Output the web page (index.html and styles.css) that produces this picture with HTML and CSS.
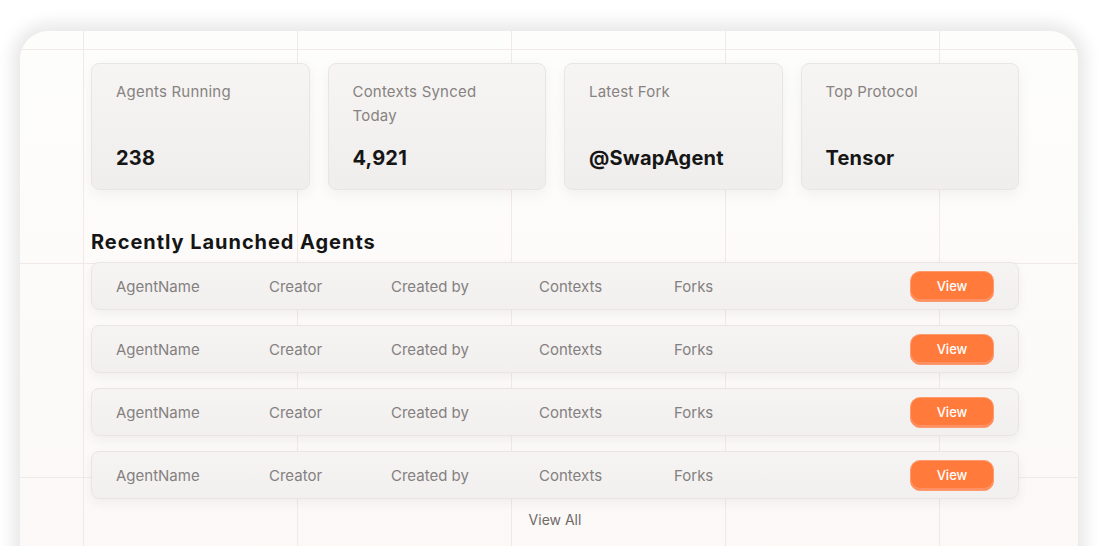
FILE: index.html
```html
<!DOCTYPE html>
<html lang="en">
<head>
<meta charset="utf-8">
<title>Agents Dashboard</title>
<link rel="stylesheet" href="styles.css">
</head>
<body>
<div class="frame">
  <section class="panel">
    <div class="content">
      <div class="stats">
        <div class="stat">
          <div class="stat-label">Agents Running</div>
          <div class="stat-value">238</div>
        </div>
        <div class="stat">
          <div class="stat-label">Contexts Synced Today</div>
          <div class="stat-value">4,921</div>
        </div>
        <div class="stat">
          <div class="stat-label">Latest Fork</div>
          <div class="stat-value">@SwapAgent</div>
        </div>
        <div class="stat">
          <div class="stat-label">Top Protocol</div>
          <div class="stat-value">Tensor</div>
        </div>
      </div>

      <h2 class="heading">Recently Launched Agents</h2>

      <div class="rows">
        <div class="row">
          <div class="cells">
            <span>AgentName</span><span>Creator</span><span>Created by</span><span>Contexts</span><span>Forks</span>
          </div>
          <button class="view-btn">View</button>
        </div>
        <div class="row">
          <div class="cells">
            <span>AgentName</span><span>Creator</span><span>Created by</span><span>Contexts</span><span>Forks</span>
          </div>
          <button class="view-btn">View</button>
        </div>
        <div class="row">
          <div class="cells">
            <span>AgentName</span><span>Creator</span><span>Created by</span><span>Contexts</span><span>Forks</span>
          </div>
          <button class="view-btn">View</button>
        </div>
        <div class="row">
          <div class="cells">
            <span>AgentName</span><span>Creator</span><span>Created by</span><span>Contexts</span><span>Forks</span>
          </div>
          <button class="view-btn">View</button>
        </div>
      </div>

      <div class="view-all">View All</div>
    </div>
  </section>
</div>
</body>
</html>
```
FILE: styles.css
```css
* { box-sizing: border-box; }

html, body {
  margin: 0;
  padding: 0;
  background: #ffffff;
  font-family: "Inter", "Liberation Sans", sans-serif;
}

.frame {
  height: 546px;
  overflow: hidden;
  padding: 31px 20px 0 20px;
}

.panel {
  height: 600px;
  border-radius: 28px 28px 0 0;
  background-color: #fcfbfa;
  background-image:
    linear-gradient(to right, #f0e9e5 1px, transparent 1px),
    linear-gradient(to bottom, #f0e9e5 1px, transparent 1px),
    linear-gradient(to bottom, #fdfdfc 0%, #fbf8f6 100%);
  background-size: 214px 214px, 214px 214px, 100% 100%;
  background-position: 63px 18px, 63px 18px, 0 0;
  box-shadow: 0 0 16px 8px rgba(0, 0, 0, 0.09);
  padding: 32px 0 0 71px;
}

.content {
  width: 928px;
  display: flex;
  flex-direction: column;
}

.stats {
  display: grid;
  grid-template-columns: repeat(4, 1fr);
  gap: 18px;
}

.stat {
  height: 127px;
  border: 1px solid #e9e5e2;
  border-radius: 8px;
  background: linear-gradient(to bottom, #f6f5f4 0%, #efeeed 100%);
  box-shadow: 0 4px 14px rgba(0, 0, 0, 0.05);
  padding: 16px 28px 17px 24px;
  display: flex;
  flex-direction: column;
  justify-content: space-between;
}

.stat-label {
  font-size: 15px;
  line-height: 24px;
  color: #888280;
  letter-spacing: 0.2px;
}

.stat-value {
  font-size: 20px;
  line-height: 28px;
  font-weight: 700;
  color: #161616;
  letter-spacing: 0.2px;
}

.heading {
  margin: 40px 0 8px 0;
  font-size: 20px;
  line-height: 24px;
  font-weight: 700;
  color: #151515;
  letter-spacing: 0.95px;
}

.rows {
  display: flex;
  flex-direction: column;
  gap: 15px;
}

.row {
  height: 48px;
  border: 1px solid #e9e5e2;
  border-radius: 8px;
  background: linear-gradient(to bottom, #f5f4f3 0%, #f1f0ef 100%);
  box-shadow: 0 4px 12px rgba(0, 0, 0, 0.05);
  display: flex;
  align-items: center;
  justify-content: space-between;
  padding: 0 24px 0 24px;
}

.cells {
  display: grid;
  grid-template-columns: 153px 122px 148px 135px auto;
  font-size: 15px;
  color: #858080;
}

.view-btn {
  width: 84px;
  height: 31px;
  border: 1px solid #ff9a6e;
  border-radius: 10px;
  background: #ff7a3b;
  box-shadow: inset 0 -2px 0 #ff9063;
  color: #ffffff;
  font-family: "Inter", "Liberation Sans", sans-serif;
  font-size: 13px;
  font-weight: 500;
  padding: 0;
}

.view-all {
  margin-top: 11px;
  text-align: center;
  font-size: 14px;
  line-height: 20px;
  color: #6f6a68;
}
```
